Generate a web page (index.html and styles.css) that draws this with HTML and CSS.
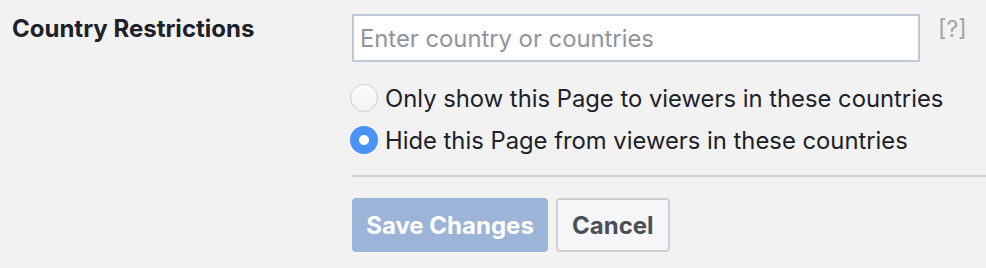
FILE: index.html
```html
<!DOCTYPE html>
<html lang="en">
<head>
  <meta charset="UTF-8">
  <title>Country Restrictions</title>
  <link rel="stylesheet" href="styles.css">
</head>
<body>

  <div class="setting">
    <div class="setting-label">Country Restrictions</div>

    <div class="setting-body">
      <div class="input-row">
        <input type="text" class="country-input" placeholder="Enter country or countries">
        <a class="help" href="#">[?]</a>
      </div>

      <div class="radio-list">
        <label class="radio">
          <input type="radio" name="mode">
          <span>Only show this Page to viewers in these countries</span>
        </label>
        <label class="radio">
          <input type="radio" name="mode" checked>
          <span>Hide this Page from viewers in these countries</span>
        </label>
      </div>

      <div class="actions">
        <button class="btn btn-primary" disabled>Save Changes</button>
        <button class="btn">Cancel</button>
      </div>
    </div>
  </div>

</body>
</html>
```

FILE: styles.css
```css
body {
  margin: 0;
  background: #f2f2f2;
  font-family: Inter, "Noto Sans", Arial, sans-serif;
  color: #1d2129;
}

.setting {
  display: flex;
  padding-top: 14px;
}

.setting-label {
  width: 352px;
  padding-left: 12px;
  padding-top: 1px;
  box-sizing: border-box;
  font-size: 24px;
  font-weight: bold;
  line-height: 28px;
}

.setting-body {
  flex: 1;
}

.input-row {
  display: flex;
  align-items: flex-start;
}

.country-input {
  width: 568px;
  height: 48px;
  box-sizing: border-box;
  border: 2px solid #bdc7d8;
  background: #fff;
  padding: 0 6px;
  margin: 0;
  font-family: inherit;
  font-size: 23.8px;
  color: #1d2129;
  outline: none;
}

.country-input::placeholder {
  color: #90949c;
}

.help {
  margin-left: 18px;
  margin-top: 1px;
  font-size: 23px;
  color: #a3a3a3;
  text-decoration: none;
}

.radio-list {
  display: flex;
  flex-direction: column;
  gap: 14px;
  margin-top: 22px;
}

.radio {
  display: flex;
  align-items: center;
  gap: 7px;
  height: 28px;
  font-size: 23.8px;
}

.radio input {
  appearance: none;
  margin: 0 0 0 -2px;
  width: 28px;
  height: 28px;
  border-radius: 50%;
  border: 1px solid #cfcfcf;
  background: linear-gradient(#fdfdfd, #f3f3f3);
  box-sizing: border-box;
}

.radio input:checked {
  border: none;
  background: radial-gradient(circle, #fff 0, #fff 4.5px, #4a93f6 5.5px);
}

.actions {
  display: flex;
  gap: 8px;
  margin-top: 21px;
  padding-top: 21px;
  border-top: 2px solid #d3d4d6;
}

.btn {
  height: 54px;
  padding: 0 14px;
  box-sizing: border-box;
  border: 2px solid #ccd0d5;
  border-radius: 4px;
  background: #f5f6f7;
  color: #4b4f56;
  font-family: inherit;
  font-size: 24px;
  font-weight: bold;
  white-space: nowrap;
}

.btn-primary {
  width: 196px;
  padding: 0;
  border-color: #9cb4d8;
  background: #9cb4d8;
  color: #fff;
}
```
